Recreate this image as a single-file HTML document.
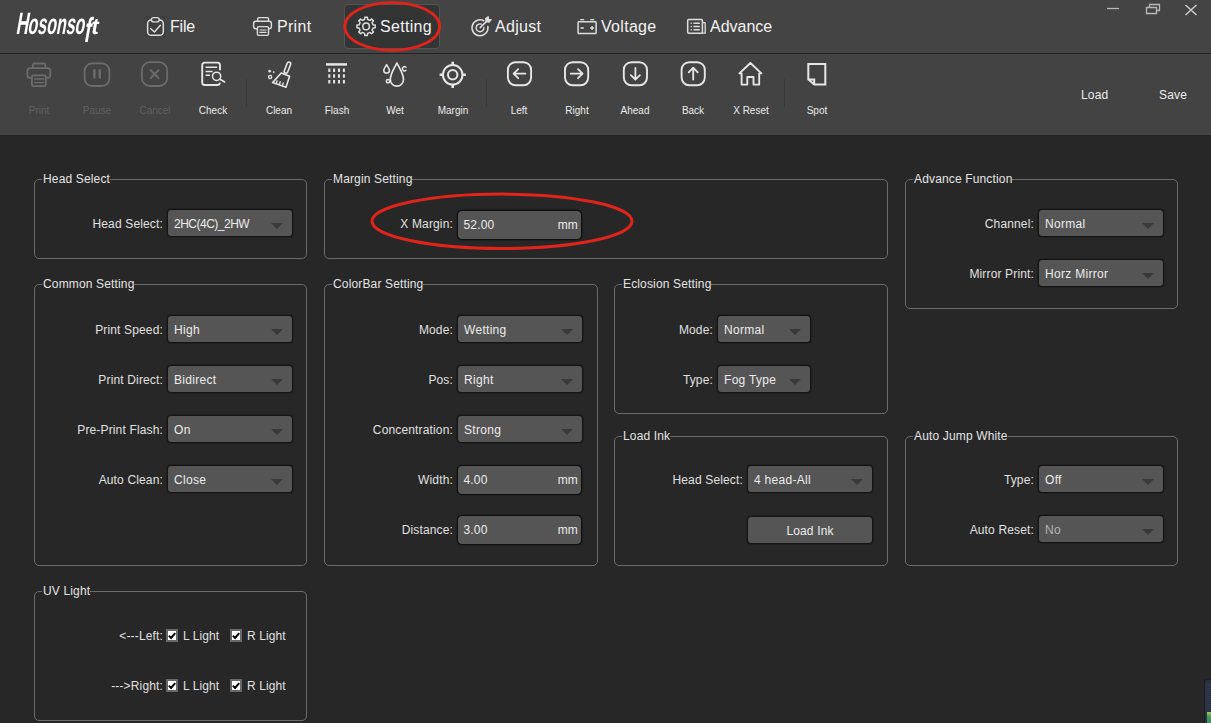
<!DOCTYPE html>
<html lang="en">
<head>
<meta charset="utf-8">
<title>Hosonsoft - Setting</title>
<style>
*{box-sizing:border-box;margin:0;padding:0}
html,body{width:1211px;height:723px;overflow:hidden;background:#272727}
body{position:relative;font-family:"Liberation Sans",sans-serif;font-size:12px;color:#dcdcdc}
.abs{position:absolute}
#top{position:absolute;left:0;top:0;width:1211px;height:53px;background:#444444}
#topline{position:absolute;left:0;top:53px;width:1211px;height:1px;background:#242424}
#tool{position:absolute;left:0;top:54px;width:1211px;height:81px;background:#434343;border-bottom:1px solid #474747;box-shadow:0 1px 0 #242424}
.mi{position:absolute;top:15px;letter-spacing:0.3px;height:24px;line-height:24px;font-size:16px;color:#f2f2f2;white-space:nowrap}
#seltab{position:absolute;left:344px;top:4px;width:96px;height:45px;background:#333434;border:1px solid #535353;border-radius:4px}
.tb{position:absolute;top:105px;width:58px;text-align:center;font-size:10px;line-height:12px;color:#ececec;white-space:nowrap}
.tb.dis{color:#606060}
.sep{position:absolute;top:79px;width:1px;height:28px;background:#383838}
.ls{position:absolute;top:88px;letter-spacing:0.15px;font-size:12px;line-height:14px;color:#ececec}
.grp{position:absolute;border:1px solid #6c6c6c;border-radius:5px}
.grp>b{position:absolute;left:7px;top:-8px;height:14px;line-height:14px;padding:0 0 0 1px;background:#272727;font-weight:normal;font-size:12px;letter-spacing:0.15px;color:#e4e4e4;white-space:nowrap}
.lb{position:absolute;height:14px;line-height:14px;transform:translateY(0.5px);margin-left:1px;letter-spacing:0.15px;text-align:right;white-space:nowrap;color:#e0e0e0;font-size:12px}
.cb{position:absolute;height:28.5px;margin-top:-0.5px;background:#555555;border:1px solid #151515;border-top-width:1.5px;box-shadow:0 0 1.5px #000;border-radius:4px;line-height:29px;padding-left:6px;color:#ececec;font-size:12px;white-space:nowrap;letter-spacing:0.3px}
.cb:after{content:"";position:absolute;right:8.75px;top:13px;border-left:6px solid transparent;border-right:6px solid transparent;border-top:6.5px solid #393939}
.cb.dis{color:#b4b4b4}
.in{position:absolute;height:30px;margin-top:-0.5px;background:#555555;border:1.5px solid #101010;box-shadow:0 0 1.5px #000;border-radius:5px;line-height:28px;padding-left:5.5px;color:#ececec;font-size:12px;white-space:nowrap;letter-spacing:0.15px}
.in i{position:absolute;right:3px;top:0;font-style:normal}
.btn{position:absolute;height:28px;background:#555555;border:1px solid #151515;box-shadow:0 0 1.5px #000;border-radius:4px;line-height:28px;text-align:center;color:#ececec;font-size:12px;letter-spacing:0.15px}
.ck{position:absolute;width:12px;height:13px;background:#fff;border:2px solid #696969}
.ck svg{position:absolute;left:-2px;top:-2px}
.cl{position:absolute;height:14px;line-height:14px;white-space:nowrap;color:#e0e0e0;font-size:12px;letter-spacing:0.1px}
.ell{position:absolute;overflow:visible}
</style>
</head>
<body>
<div id="top"></div>
<div id="topline"></div>
<div id="tool"></div>

<!-- MENU -->
<svg class="abs" style="left:0;top:0;overflow:visible;will-change:transform" width="130" height="53" role="img" aria-label="Hosonsoft"><text transform="translate(15.6,34) skewX(-10) scale(0.55,1)" font-family="Liberation Sans, sans-serif" font-weight="bold" fill="#ffffff"><tspan font-size="31">H</tspan><tspan font-size="29" dx="-1">osonso</tspan><tspan font-size="35" dy="7.5" dx="1">f</tspan><tspan font-size="23" dy="-7.5" dx="-1" textLength="13" lengthAdjust="spacingAndGlyphs">t</tspan></text></svg>
<div id="seltab"></div>
<div class="mi" style="left:170px;letter-spacing:-0.2px">File</div>
<div class="mi" style="left:277px">Print</div>
<div class="mi" style="left:380px">Setting</div>
<div class="mi" style="left:495px">Adjust</div>
<div class="mi" style="left:601px">Voltage</div>
<div class="mi" style="left:710px;letter-spacing:0px">Advance</div>


<!-- TOOLBAR -->
<div class="tb dis" style="left:10px">Print</div>
<div class="tb dis" style="left:68px">Pause</div>
<div class="tb dis" style="left:126px">Cancel</div>
<div class="tb" style="left:184px">Check</div>
<div class="sep" style="left:246px"></div>
<div class="tb" style="left:250px">Clean</div>
<div class="tb" style="left:308px">Flash</div>
<div class="tb" style="left:366px">Wet</div>
<div class="tb" style="left:424px">Margin</div>
<div class="sep" style="left:486px"></div>
<div class="tb" style="left:490px">Left</div>
<div class="tb" style="left:548px">Right</div>
<div class="tb" style="left:606px">Ahead</div>
<div class="tb" style="left:664px">Back</div>
<div class="tb" style="left:722px">X Reset</div>
<div class="sep" style="left:784px"></div>
<div class="tb" style="left:788px">Spot</div>
<div class="ls" style="left:1081px">Load</div>
<div class="ls" style="left:1159px">Save</div>
<svg class="abs" style="left:0;top:0" width="1211" height="135" viewBox="0 0 1211 135" fill="none" stroke-linecap="round" stroke-linejoin="round">
<!-- window controls -->
<g stroke="#b8b8b8" stroke-width="1.3" stroke-linecap="butt" stroke-linejoin="miter">
<path d="M1107 8.5 H1119"/>
<path d="M1146.5 7.5 H1156.5 V13.5 H1146.5 Z"/>
<path d="M1149.5 7.5 V4.5 H1159.5 V10.5 H1156.5"/>
<path d="M1185.5 5 L1196.5 15 M1196.5 5 L1185.5 15" stroke="#cccccc" stroke-width="1.5"/>
</g>
<!-- menu icons -->
<rect x="145" y="16" width="21" height="21" fill="#3f3f3f" stroke="none"/>
<g stroke="#dedede" stroke-width="1.5">
<!-- file -->
<rect x="147.6" y="19.9" width="15.7" height="15.4" rx="3.6"/>
<rect x="151.4" y="17.6" width="7.8" height="4.3" rx="2.1" fill="#404040" stroke-width="1.4"/>
<path d="M150.6 28.6 L154.4 32 L160.4 25.3" stroke-width="1.4"/>
<!-- print -->
<path d="M257.7 21 V18.7 a1.1 1.1 0 0 1 1.1 -1.1 h8.6 a1.1 1.1 0 0 1 1.1 1.1 V21" stroke-width="1.4"/>
<rect x="253.6" y="21.2" width="17.8" height="7.6" rx="2.2" stroke-width="1.4"/>
<rect x="257.4" y="26.6" width="11.1" height="8.8" rx="1.3" fill="#444444" stroke-width="1.4"/>
<path d="M259.9 30 h6.1 M259.9 32.4 h6.1" stroke-width="1.2"/>
<!-- gear -->
<path d="M364.55 19.47 L364.80 17.29 L367.40 17.29 L367.65 19.47 L369.90 20.41 L371.62 19.04 L373.46 20.88 L372.09 22.60 L373.03 24.85 L375.21 25.10 L375.21 27.70 L373.03 27.95 L372.09 30.20 L373.46 31.92 L371.62 33.76 L369.90 32.39 L367.65 33.33 L367.40 35.51 L364.80 35.51 L364.55 33.33 L362.30 32.39 L360.58 33.76 L358.74 31.92 L360.11 30.20 L359.17 27.95 L356.99 27.70 L356.99 25.10 L359.17 24.85 L360.11 22.60 L358.74 20.88 L360.58 19.04 L362.30 20.41 Z" stroke-width="1.5"/>
<circle cx="366.1" cy="26.4" r="3.3" stroke-width="1.5"/>
<!-- adjust -->
<path d="M483.76 20.74 A8.0 8.0 0 1 0 487.88 26.41" stroke-width="1.5"/>
<path d="M481.33 24.14 A3.9 3.9 0 1 0 483.89 27.46" stroke-width="1.4"/>
<path d="M480.2 27.6 L487.2 20.6" stroke-width="1.5"/>
<path d="M486.2 21.6 L485.6 18.6 L488.2 16.6 L488.6 19.2 L491.2 19.6 L489.2 22.2 Z" stroke-width="1.1" fill="#dedede"/>
<!-- voltage -->
<rect x="578.1" y="21.8" width="18" height="11.7" rx="0.8"/>
<path d="M580.2 19.6 H584.2 M590.2 19.6 H594.2" stroke-width="1.4" stroke-linecap="butt"/>
<path d="M580.5 28 H583.8 M590.1 28 H594.1 M592.1 26 V30" stroke-width="1.4" stroke-linecap="butt"/>
<!-- advance -->
<rect x="687.7" y="19.4" width="14.7" height="13.8" rx="1"/>
<path d="M703.2 22.6 H704.4 a0.8 0.8 0 0 1 0.8 0.8 V33.2 H702.4" stroke-width="1.3"/>
<path d="M690.6 23.2 h1.2 M693.4 23.2 H699.8 M690.6 26.5 h1.2 M693.4 26.5 H699.8 M690.6 29.8 h1.2 M693.4 29.8 H699.8" stroke-width="1.4" stroke-linecap="butt"/>
</g>
<!-- red ellipse on Setting -->
<ellipse cx="392.2" cy="26.4" rx="47.4" ry="23.8" stroke="#e0241b" stroke-width="2.9"/>

<!-- toolbar disabled icons -->
<g stroke="#6c6c6c" stroke-width="1.8">
<!-- print -->
<path d="M32.9 68 V64.8 a1.3 1.3 0 0 1 1.3 -1.3 h9.8 a1.3 1.3 0 0 1 1.3 1.3 V68"/>
<rect x="27.4" y="68.2" width="22.9" height="9.6" rx="2.6"/>
<rect x="31.9" y="75.3" width="13.9" height="10.8" rx="1.5" fill="#434343"/>
<path d="M34.6 79 h8.5 M34.6 82.6 h8.5" stroke-width="1.4"/>
<!-- pause -->
<rect x="84.6" y="63.4" width="24.8" height="22.6" rx="7.5"/>
<path d="M94.4 69.3 V78.6 M99.8 69.3 V78.6" stroke-width="2.4" stroke-linecap="butt"/>
<!-- cancel -->
<rect x="141.9" y="62.2" width="25.3" height="23.8" rx="8"/>
<path d="M150.7 70.3 L158.5 78.1 M158.5 70.3 L150.7 78.1" stroke-width="2"/>
</g>
<!-- toolbar enabled icons -->
<g stroke="#e6e6e6" stroke-width="1.9">
<!-- check -->
<path d="M220 69.6 V65.2 a2.6 2.6 0 0 0 -2.6 -2.6 H204.8 a2.6 2.6 0 0 0 -2.6 2.6 V82.4 a2.6 2.6 0 0 0 2.6 2.6 H217.4 a2.6 2.6 0 0 0 2.4 -1.6" stroke-width="1.9"/>
<path d="M205.6 67.3 H217.2 M205.6 71.5 H212.6 M205.6 75.3 H210" stroke-width="1.6" stroke-linecap="butt"/>
<circle cx="216.6" cy="76.3" r="4.1" stroke-width="1.5"/>
<path d="M220 79.3 L224.6 82" stroke-width="1.6"/>
<!-- clean -->
<path d="M288.9 63.9 L286 71.4" stroke-width="5.2"/><path d="M288.9 63.9 L286 71.4" stroke="#434343" stroke-width="2"/>
<path d="M281.2 73 L289.6 76.3 L286 87.2 L272.6 82.6 Z" stroke-width="1.6"/>
<path d="M277.3 80.2 L276.2 83.6 M280.4 81.2 L279.3 84.7 M283.4 82.4 L282.4 85.8" stroke-width="1.3" stroke-linecap="butt"/>
<circle cx="269.6" cy="71.2" r="1.1" fill="#e6e6e6" stroke-width="0.6"/>
<circle cx="273.6" cy="72.1" r="0.6" fill="#e6e6e6" stroke-width="0.5"/>
<circle cx="270.1" cy="76.9" r="1.6" stroke-width="1.3"/>
<!-- flash -->
<path d="M326 64.4 H347" stroke-width="2.5" stroke-linecap="butt"/>
<path d="M329.3 68.6 v3.5 M334.1 68.6 v3.5 M339 68.6 v3.5 M343.9 68.6 v3.5 M329.3 74.2 v3.5 M334.1 74.2 v3.5 M339 74.2 v3.5 M343.9 74.2 v3.5 M329.3 80.1 v3.5 M334.1 80.1 v3.5 M339 80.1 v3.5 M343.9 80.1 v3.5" stroke-width="2" stroke-linecap="butt"/>
<!-- wet -->
<path d="M396.9 63 C394.6 68 390.3 73.4 390.3 79.6 a6.6 6.6 0 0 0 13.2 0 C403.5 73.4 399.2 68 396.9 63 Z" stroke-width="1.7"/>
<path d="M386.6 64.6 C385.6 66.8 383.8 68.4 383.8 70.4 a2.8 2.7 0 0 0 5.6 0 C389.4 68.4 387.6 66.8 386.6 64.6 Z" stroke-width="1.5"/>
<path d="M405.9 67.2 A2.1 2.1 0 1 0 405.9 70.4" stroke-width="1.5"/>
<circle cx="388" cy="81.3" r="1.7" stroke-width="1.5"/>
<!-- margin -->
<circle cx="452.7" cy="74.8" r="9.8" stroke-width="2"/>
<circle cx="452.7" cy="74.8" r="4.7" stroke-width="2"/>
<path d="M452.7 61.7 V65.4 M452.7 84.2 V87.9 M439.6 74.8 H443.3 M462.1 74.8 H465.8" stroke-width="2.6" stroke-linecap="butt"/>
<!-- left -->
<rect x="507.9" y="62.2" width="23.2" height="23" rx="7.6"/>
<path d="M525.4 73.7 H513.8 M518.2 69.2 L513.6 73.7 L518.2 78.2" stroke-width="1.8"/>
<!-- right -->
<rect x="565" y="62.2" width="23.2" height="23" rx="7.6"/>
<path d="M570.8 73.7 H582.4 M578 69.2 L582.6 73.7 L578 78.2" stroke-width="1.8"/>
<!-- ahead -->
<rect x="623.8" y="62.2" width="23.2" height="23" rx="7.6"/>
<path d="M635.4 67.9 V79.5 M630.9 75.1 L635.4 79.7 L639.9 75.1" stroke-width="1.8"/>
<!-- back -->
<rect x="681.6" y="62.2" width="23.2" height="23" rx="7.6"/>
<path d="M693.2 79.5 V67.9 M688.7 72.3 L693.2 67.7 L697.7 72.3" stroke-width="1.8"/>
<!-- home -->
<path d="M739.4 73.4 L750.4 63 L761.4 73.4 H759.2 V84.6 H753.5 V77 H747.3 V84.6 H741.6 V73.4 Z" stroke-width="1.9"/>
<!-- spot -->
<path d="M808.3 63.9 H825.3 V84.6 H814.2 L808.3 79.4 Z M808.3 79.4 H814.2 V84.6" stroke-width="2" stroke-linejoin="miter"/>
</g>
</svg>


<!-- PANELS -->
<!-- Head Select -->
<div class="grp" style="left:34px;top:179px;width:273px;height:80px"><b>Head Select</b></div>
<div class="lb" style="left:62px;top:216px;width:100px">Head Select:</div>
<div class="cb" style="left:167px;top:209px;width:126px"><span style="letter-spacing:-0.5px">2HC(4C)_2HW</span></div>

<!-- Margin Setting -->
<div class="grp" style="left:324px;top:179px;width:564px;height:80px"><b>Margin Setting</b></div>
<div class="lb" style="left:352px;top:216px;width:100px">X Margin:</div>
<div class="in" style="left:457px;top:210px;width:125px">52.00<i>mm</i></div>
<svg class="ell" style="left:368px;top:190px" width="268" height="62"><ellipse cx="134" cy="31.3" rx="130" ry="27.2" fill="none" stroke="#e0241b" stroke-width="3"/></svg>

<!-- Advance Function -->
<div class="grp" style="left:905px;top:179px;width:273px;height:130px"><b>Advance Function</b></div>
<div class="lb" style="left:933px;top:216px;width:100px">Channel:</div>
<div class="cb" style="left:1038px;top:209px;width:126px">Normal</div>
<div class="lb" style="left:933px;top:266px;width:100px">Mirror Print:</div>
<div class="cb" style="left:1038px;top:259px;width:126px">Horz Mirror</div>

<!-- Common Setting -->
<div class="grp" style="left:34px;top:284px;width:273px;height:282px"><b>Common Setting</b></div>
<div class="lb" style="left:62px;top:322px;width:100px">Print Speed:</div>
<div class="cb" style="left:167px;top:315px;width:126px">High</div>
<div class="lb" style="left:62px;top:372px;width:100px">Print Direct:</div>
<div class="cb" style="left:167px;top:365px;width:126px">Bidirect</div>
<div class="lb" style="left:62px;top:422px;width:100px">Pre-Print Flash:</div>
<div class="cb" style="left:167px;top:415px;width:126px">On</div>
<div class="lb" style="left:62px;top:472px;width:100px">Auto Clean:</div>
<div class="cb" style="left:167px;top:465px;width:126px">Close</div>

<!-- ColorBar Setting -->
<div class="grp" style="left:324px;top:284px;width:274px;height:282px"><b>ColorBar Setting</b></div>
<div class="lb" style="left:352px;top:322px;width:100px">Mode:</div>
<div class="cb" style="left:457px;top:315px;width:126px">Wetting</div>
<div class="lb" style="left:352px;top:372px;width:100px">Pos:</div>
<div class="cb" style="left:457px;top:365px;width:126px">Right</div>
<div class="lb" style="left:352px;top:422px;width:100px">Concentration:</div>
<div class="cb" style="left:457px;top:415px;width:126px">Strong</div>
<div class="lb" style="left:352px;top:472px;width:100px">Width:</div>
<div class="in" style="left:457px;top:465px;width:125px">4.00<i>mm</i></div>
<div class="lb" style="left:352px;top:522px;width:100px">Distance:</div>
<div class="in" style="left:457px;top:515px;width:125px">3.00<i>mm</i></div>

<!-- Eclosion Setting -->
<div class="grp" style="left:614px;top:284px;width:274px;height:130px"><b>Eclosion Setting</b></div>
<div class="lb" style="left:612px;top:322px;width:100px">Mode:</div>
<div class="cb" style="left:717px;top:315px;width:94px">Normal</div>
<div class="lb" style="left:612px;top:372px;width:100px">Type:</div>
<div class="cb" style="left:717px;top:365px;width:94px">Fog Type</div>

<!-- Load Ink -->
<div class="grp" style="left:614px;top:436px;width:274px;height:130px"><b>Load Ink</b></div>
<div class="lb" style="left:642px;top:472px;width:100px">Head Select:</div>
<div class="cb" style="left:747px;top:465px;width:126px">4 head-All</div>
<div class="btn" style="left:747px;top:516px;width:126px">Load Ink</div>

<!-- Auto Jump White -->
<div class="grp" style="left:905px;top:436px;width:273px;height:130px"><b>Auto Jump White</b></div>
<div class="lb" style="left:933px;top:472px;width:100px">Type:</div>
<div class="cb" style="left:1038px;top:465px;width:126px">Off</div>
<div class="lb" style="left:933px;top:522px;width:100px">Auto Reset:</div>
<div class="cb dis" style="left:1038px;top:515px;width:126px">No</div>

<!-- UV Light -->
<div class="grp" style="left:34px;top:591px;width:273px;height:130px"><b>UV Light</b></div>
<div class="lb" style="left:62px;top:628px;width:100px">&lt;---Left:</div>
<div class="ck" style="left:166px;top:629px"><svg width="12" height="13" viewBox="0 0 12 13"><path d="M2.9 6.6 L5.1 8.9 L9.2 4.1" fill="none" stroke="#000" stroke-width="2"/></svg></div>
<div class="cl" style="left:183px;top:629px">L Light</div>
<div class="ck" style="left:230px;top:629px"><svg width="12" height="13" viewBox="0 0 12 13"><path d="M2.9 6.6 L5.1 8.9 L9.2 4.1" fill="none" stroke="#000" stroke-width="2"/></svg></div>
<div class="cl" style="left:247px;top:629px">R Light</div>
<div class="lb" style="left:62px;top:678px;width:100px">---&gt;Right:</div>
<div class="ck" style="left:166px;top:679px"><svg width="12" height="13" viewBox="0 0 12 13"><path d="M2.9 6.6 L5.1 8.9 L9.2 4.1" fill="none" stroke="#000" stroke-width="2"/></svg></div>
<div class="cl" style="left:183px;top:679px">L Light</div>
<div class="ck" style="left:230px;top:679px"><svg width="12" height="13" viewBox="0 0 12 13"><path d="M2.9 6.6 L5.1 8.9 L9.2 4.1" fill="none" stroke="#000" stroke-width="2"/></svg></div>
<div class="cl" style="left:247px;top:679px">R Light</div>

<!-- corner widget -->
<div class="abs" style="left:1204px;top:679px;width:8px;height:44px;background:#2b3140;border-top-left-radius:3px;border-left:1px solid #1b1f2a;border-top:1px solid #1b1f2a"></div>
<div class="abs" style="left:1207px;top:684px;width:4px;height:28px;background:repeating-linear-gradient(#343a4a 0 1px,#292e3c 1px 2px)"></div>
<div class="abs" style="left:1207px;top:712px;width:4px;height:11px;background:linear-gradient(#9fcf62,#4e9a50 40%,#3f8c6a)"></div>


</body>
</html>
